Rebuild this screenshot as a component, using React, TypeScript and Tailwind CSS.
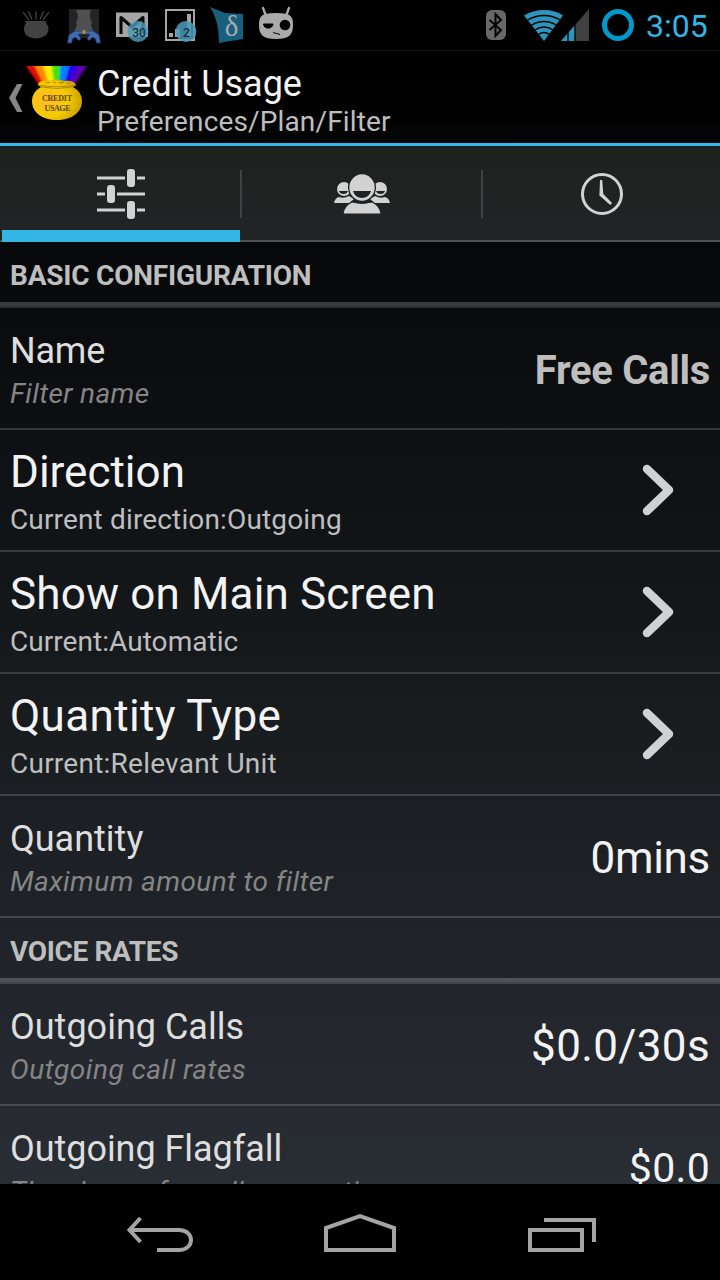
import { ReactNode } from "react";

type Setting = {
    title: string;
    detail: string;
    value?: string;
    valueStyle?: string;
    titleTracking?: string;
    detailTracking?: string;
};

const basic: Setting[] = [
    {
        title: "Name",
        detail: "Filter name",
        value: "Free Calls",
        valueStyle: "pt-[37px] text-[40px] font-bold text-[#bebebe] tracking-[-0.3px]",
        titleTracking: "tracking-[-0.2px]",
        detailTracking: "tracking-[0.36px]",
    },
    { title: "Direction", detail: "Current direction:Outgoing", detailTracking: "tracking-[0.15px]" },
    {
        title: "Show on Main Screen",
        detail: "Current:Automatic",
        titleTracking: "tracking-[0.16px]",
        detailTracking: "tracking-[0.05px]",
    },
    {
        title: "Quantity Type",
        detail: "Current:Relevant Unit",
        titleTracking: "tracking-[0.35px]",
        detailTracking: "tracking-[0.24px]",
    },
    {
        title: "Quantity",
        detail: "Maximum amount to filter",
        value: "0mins",
        valueStyle: "pt-9 text-[44px] text-[#f3f3f3] tracking-[-0.3px]",
        detailTracking: "tracking-[0.38px]",
    },
];

const voice: Setting[] = [
    {
        title: "Outgoing Calls",
        detail: "Outgoing call rates",
        value: "$0.0/30s",
        valueStyle: "pt-9 text-[44px] text-[#f3f3f3] tracking-[0.35px]",
        detailTracking: "tracking-[0.5px]",
    },
    {
        title: "Outgoing Flagfall",
        detail: "The charge for call connection",
        value: "$0.0",
        valueStyle: "pt-9 text-[41px] text-[#f3f3f3] tracking-[0.3px]",
        titleTracking: "tracking-[-0.05px]",
        detailTracking: "tracking-[0.48px]",
    },
];

const rays = ["#e00800", "#ff8a00", "#fff000", "#43e500", "#0084ff", "#2a00f0", "#5c00b0"];

function NotificationIcons() {
    return (
        <svg width="300" height="50" viewBox="0 0 300 50" className="shrink-0">
            {/* pot */}
            <path d="M23 12l6 8M28.500 11.500l3.500 8M36 11.500v8M43.500 11.500l-3.500 8M49 12l-6 8" fill="none" stroke="#4a4a4a" strokeWidth="1.200" />
            <path d="M25 21h21v2q2.500 2.500 2.500 6c0 6-6 9.500-12.500 9.500S24 35 24 29q0-3.500 2-6z" fill="#424242" />
            {/* hands */}
            <rect x="69" y="9" width="30" height="29" fill="#242424" />
            <path d="M76 10h15q-3 7 1 12l-1 3 2 6H74l3-6-1-3q4-5 0-12z" fill="#505050" />
            <path d="M67.500 43l1.500-8 6-4h8l.5 2.500-5.500.8 3 4.700-2 1.500-4-3.500-2.500 2-1 4zM100.500 43l-1.500-8-6-4h-8l-.5 2.500 5.500.8-3 4.700 2 1.500 4-3.500 2.500 2 1 4z" fill="#4268ae" stroke="#203c79" strokeWidth=".7" />
            <path d="M82.500 30h3v4h-3z" fill="#b78b25" />
            {/* mail */}
            <rect x="116" y="12.500" width="32" height="24.500" fill="#a5a5a5" />
            <path d="M121 34V17.500l11 9.500 11-9.500V34" fill="none" stroke="#080808" strokeWidth="3" strokeLinejoin="round" />
            <circle cx="138" cy="31.500" r="10.500" fill="#4b9bba" fillOpacity=".82" />
            <text x="139" y="37" textAnchor="middle" fontSize="12" fill="#18333e" fontFamily="Roboto" fontWeight="500">30</text>
            {/* signal counter */}
            <rect x="166" y="10" width="28" height="30" fill="none" stroke="#a5a5a5" strokeWidth="2" />
            <path d="M169 33h4v4h-4zM175 29h5v8h-5zM187 14h4v23h-4z" fill="#a5a5a5" />
            <circle cx="186" cy="31.500" r="10.500" fill="#4b9bba" fillOpacity=".86" />
            <text x="186.500" y="37" textAnchor="middle" fontSize="13" fill="#18333e" fontFamily="Roboto" fontWeight="500">2</text>
            {/* delta */}
            <path d="M210 7l15 6 18 1v25l-24 4q0-23-9-36z" fill="#16607d" />
            <text x="231.500" y="35.500" textAnchor="middle" fontSize="29" fill="#aaa" fontFamily="Liberation Serif">δ</text>
            {/* robot face */}
            <path d="M263 8l3 8M289 8l-3 8" stroke="#aaa" strokeWidth="2.300" strokeLinecap="round" />
            <path d="M265 14q11-2 22 0c5 2 6 5 6 11 0 10-4 14-17 14s-17-4-17-14c0-6 1-9 6-11z" fill="#aaa" />
            <circle cx="285" cy="25" r="5.300" fill="#030303" />
            <path d="M263.500 24h9.500a4.800 4.800 0 0 1-9.500 0zM273 32.500l7 2" fill="#030303" stroke="#030303" strokeWidth="1" />
        </svg>
    );
}

function SystemIcons() {
    return (
        <svg width="160" height="50" viewBox="480 0 160 50" className="shrink-0">
            <rect x="486" y="10" width="20" height="30" rx="6" fill="#686868" />
            <path d="M489.500 20l11.500 10-5.500 6V14l5.500 6-11.500 10" fill="none" stroke="#050505" strokeWidth="2" />
            {/* wifi */}
            <path d="M544 41L524 15.500Q533 10 544 10t19 5.500z" fill="#2d94bd" />
            <g fill="none" stroke="#000" strokeWidth="1.300">
                <path d="M527 20.500q8-5 17-5t17 5" />
                <path d="M531 25.500q6-4 13-4t13 4" />
                <path d="M535 30q4-3 9-3t9 3" />
                <path d="M538.500 34.500q2.500-2 5.500-2t5.500 2" />
            </g>
            {/* mobile signal */}
            <path d="M561 41l28-32v32z" fill="#404040" />
            <path d="M561 41l14-16v16z" fill="#2d94bd" />
            <path d="M568 31v10M575 22v19" stroke="#000" strokeWidth="1.300" />
            <circle cx="618" cy="25" r="13.500" fill="none" stroke="#0099cc" strokeWidth="5" />
        </svg>
    );
}

function AppIcon() {
    return (
        <svg width="64" height="64" viewBox="25 63 64 64" className="shrink-0">
            <defs>
                <radialGradient id="gold" cx=".3" cy=".5" r=".75">
                    <stop stopColor="#ffb92a" />
                    <stop offset=".55" stopColor="#f5cc00" />
                    <stop offset="1" stopColor="#c79b00" />
                </radialGradient>
                <filter id="soft" x="-5%" y="-5%" width="110%" height="110%">
                    <feGaussianBlur stdDeviation="1.2 0" />
                </filter>
            </defs>
            <g filter="url(#soft)">
                {rays.map((color, i) => (
                    <path
                        key={color}
                        d={`M${26 + i * 8.6} 66h9L${44.5 + i * 5} 85h-5.500z`}
                        fill={color}
                    />
                ))}
            </g>
            <path d="M38 85q1-5 9-4 10-3 17 0 10-1 12 4l-3 2q9 5 9 14c0 12-11 19-25 19S32 113 32 101q0-9 9-14z" fill="url(#gold)" />
            <path d="M38 85q19 3.500 38 0M41 87q16 3 32 0" fill="none" stroke="#a88300" strokeWidth=".9" />
            <path d="M46 83l2-1 2 1M53 82l3 1M59 82l2 1 3-1M67 83l3 .5" fill="none" stroke="#a37b00" strokeWidth=".9" />
            <g fill="#604600" fontFamily="Liberation Serif" fontSize="8" fontWeight="700" textAnchor="middle">
                <text x="57" y="100.500" textLength="30" lengthAdjust="spacing">CREDIT</text>
                <text x="57.500" y="110.500" textLength="26" lengthAdjust="spacing">USAGE</text>
            </g>
        </svg>
    );
}

function SlidersIcon() {
    return (
        <svg width="50" height="52" viewBox="96 168 50 52">
            <path d="M97 178h28m12 0h8M97 194h8m12 0h28M97 210h28m12 0h8" stroke="#d2d2d2" strokeWidth="3" />
            <rect x="127" y="169" width="8" height="18" rx="3" fill="#d2d2d2" />
            <rect x="107" y="185" width="8" height="18" rx="3" fill="#d2d2d2" />
            <rect x="127" y="201" width="8" height="18" rx="3" fill="#d2d2d2" />
        </svg>
    );
}

function PeopleIcon() {
    return (
        <svg width="56" height="52" viewBox="333 168 56 52" fill="#d2d2d2">
            <circle cx="343" cy="189" r="7" />
            <circle cx="379" cy="189" r="7" />
            <path d="M338 191h9q-1 3-4.500 3t-4.500-3zM375 191h9q-1 3-4.500 3t-4.500-3z" fill="#202122" />
            <path d="M333 203q1-5 5-6 5 2 10-1l5 3-5 4zM389 203q-1-5-5-6-5 2-10-1l-5 3 5 4z" />
            <path d="M342 214q1-8 9-12 10 3 20 0 8 4 9 12z" stroke="#202122" strokeWidth="1" />
            <ellipse cx="361" cy="187.500" rx="14" ry="14.500" fill="#202122" />
            <ellipse cx="361" cy="187.500" rx="12.700" ry="13.200" />
            <path d="M352 191h18q-2 7-9 7t-9-7z" fill="#202122" />
        </svg>
    );
}

function ClockIcon() {
    return (
        <svg width="44" height="52" viewBox="580 168 44 52">
            <circle cx="602" cy="194" r="19.500" fill="none" stroke="#d2d2d2" strokeWidth="3" />
            <path d="M600 180h2.200l1.100 14 8.700 9-1.800 2-10.800-9.500z" fill="#d2d2d2" />
        </svg>
    );
}

function SectionTitle({ children, tracking }: { children: ReactNode; tracking: string }) {
    return (
        <div className="h-[66px] shrink-0 border-b-2 border-white/15">
            <h2 className={`h-16 border-b-4 border-white/20 px-2.5 pt-3.5 text-[28px] font-bold leading-10 text-[#bebebe] ${tracking}`}>
                {children}
            </h2>
        </div>
    );
}

function SettingRow({ item }: { item: Setting }) {
    const opens = !item.value;
    return (
        <div className="flex h-[122px] shrink-0 justify-between border-b-2 border-white/16 px-2.5">
            <div className={opens ? "pt-4" : "pt-[22px]"}>
                <div className={`${opens ? "text-[44px] leading-[52px] text-[#f3f3f3]" : "text-4xl leading-[43px] text-[#dedede]"} ${item.titleTracking ?? ""}`}>
                    {item.title}
                </div>
                <div className={`text-[28px] ${opens ? "pt-[5px] leading-[33px] text-[#bebebe]" : "leading-[42px] text-[#858585] italic"} ${item.detailTracking ?? ""}`}>
                    {item.detail}
                </div>
            </div>
            {opens ? (
                <svg width="34" height="54" viewBox="641 463 34 54" className="mt-[33px] mr-[35px]">
                    <path d="M647 469l22 21-22 21" fill="none" stroke="#d0d1d2" strokeWidth="8.500" strokeLinecap="round" strokeLinejoin="round" />
                </svg>
            ) : (
                <div className={`leading-[52px] ${item.valueStyle}`}>{item.value}</div>
            )}
        </div>
    );
}

export default function App() {
    return (
        <div className="flex h-[1280px] w-[720px] flex-col overflow-hidden bg-black font-['Roboto',sans-serif] whitespace-nowrap">
            <div className="flex h-[50px] shrink-0 justify-between">
                <NotificationIcons />
                <div className="flex">
                    <SystemIcons />
                    <div className="w-20 pl-1.5 text-[32px] leading-[52px] text-[#33b5e5]">3:05</div>
                </div>
            </div>

            <header className="flex h-24 shrink-0 border-t border-b-3 border-t-[#141414] border-b-[#33b5e5] bg-linear-to-b from-black to-[#050607]">
                <svg width="16" height="32" viewBox="8 82 16 32" className="mt-[31px] ml-2 shrink-0">
                    <path d="M17 84h5.500l-7 14 7 14H17l-8-14z" fill="#858585" />
                </svg>
                <div className="mt-3 ml-px"><AppIcon /></div>
                <div className="pt-[11px] pl-2">
                    <h1 className="text-4xl leading-[44px] text-[#f3f3f3]">Credit Usage</h1>
                    <div className="text-[28px] leading-[32px] tracking-[0.14px] text-[#bebebe]">Preferences/Plan/Filter</div>
                </div>
            </header>

            <nav className="flex h-24 shrink-0 items-center border-b-2 border-[#505153] bg-linear-to-b from-[#1f211f] to-[#222325]">
                <div className="relative flex h-full w-60 items-center justify-center pt-0.5 pl-0.5">
                    <SlidersIcon />
                    <div className="absolute -bottom-0.5 left-0.5 right-0 h-3 bg-[#33b5e5]" />
                </div>
                <div className="mt-0.5 h-12 w-0.5 bg-[#414243]" />
                <div className="flex h-full w-[239px] items-center justify-center pt-0.5">
                    <PeopleIcon />
                </div>
                <div className="mt-0.5 h-12 w-0.5 bg-[#414243]" />
                <div className="flex h-full flex-1 items-center justify-center pt-0.5 pl-px">
                    <ClockIcon />
                </div>
            </nav>

            <main className="flex h-[942px] shrink-0 flex-col overflow-hidden bg-linear-to-b from-[#07080a] via-[#181c1f] to-[#292d34]">
                <SectionTitle tracking="tracking-[-0.22px]">BASIC CONFIGURATION</SectionTitle>
                {basic.map((item) => <SettingRow key={item.title} item={item} />)}
                <SectionTitle tracking="tracking-[-0.36px]">VOICE RATES</SectionTitle>
                {voice.map((item) => <SettingRow key={item.title} item={item} />)}
            </main>

            <footer className="flex h-24 shrink-0 items-center justify-center">
                <svg width="720" height="96" viewBox="0 1184 720 96" fill="none" stroke="#a4a4a4" strokeWidth="4">
                    <path d="M157 1250h22c16 0 16-20 0-20h-49M140.500 1218l-11 12 11 12" />
                    <path d="M326 1250v-22l34-12 34 12v22z" />
                    <path d="M530 1230h52v20h-52zM544 1220h50v22" />
                </svg>
            </footer>
        </div>
    );
}
